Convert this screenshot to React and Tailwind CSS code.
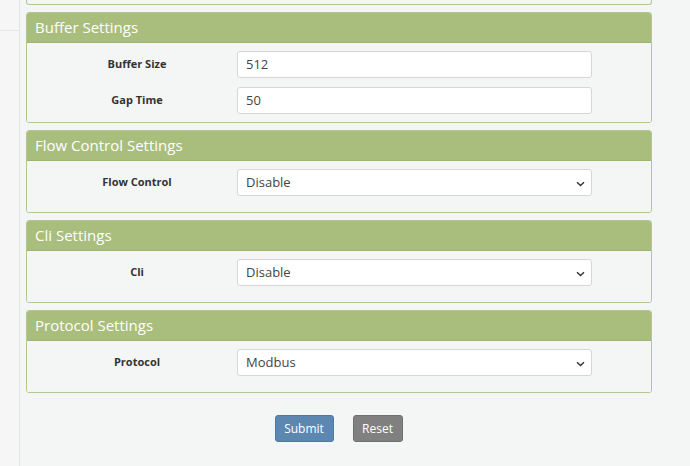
import React from 'react';

const font = { fontFamily: '"Open Sans", "Noto Sans", sans-serif' };

const Chevron = () => (
  <svg width="9" height="6" viewBox="0 0 9 6" className="absolute right-[6px] top-[11px]">
    <path d="M1 1.2 L4.5 4.6 L8 1.2" fill="none" stroke="#333" strokeWidth="1.4" />
  </svg>
);

const Field = ({ label, value, select }) => (
  <div className="flex items-center h-[27px]">
    <div className="w-[200px] text-center text-[11px] font-bold text-[#333]">{label}</div>
    <div className="relative w-[355px] h-[27px] bg-white border border-[#d6d6d6] rounded-[3px] flex items-center pl-[8px] text-[13px] text-[#444]">
      {value}
      {select && <Chevron />}
    </div>
  </div>
);

const Card = ({ title, children, bottom }) => (
  <div className="border border-[#b4c78f] rounded-[3px] overflow-hidden">
    <div className="h-[30px] bg-[#a9bd7c] border-b border-[#9fb472] flex items-center pl-[8px] text-[15px] text-white">
      {title}
    </div>
    <div className={`bg-[#f4f6f6] pl-[10px] pt-[8px] flex flex-col gap-[9px] ${bottom}`}>{children}</div>
  </div>
);

export default function App() {
  return (
    <div style={font} className="w-[690px] h-[466px] overflow-hidden flex bg-[#f4f6f6]">
      <div className="w-[20px] shrink-0 bg-[#f6f6f6] border-r border-[#e2e4e4] flex flex-col">
        <div className="h-[31px] border-b border-[#e6e6e6]" />
      </div>
      <div className="flex-1 pl-[6px] pr-[38px]">
        <div className="h-[5px] border border-t-0 border-[#b4c78f] rounded-b-[3px] bg-[#f4f6f6]" />
        <div className="mt-[7px] flex flex-col gap-[7px]">
          <Card title="Buffer Settings" bottom="pb-[8px]">
            <Field label="Buffer Size" value="512" />
            <Field label="Gap Time" value="50" />
          </Card>
          <Card title="Flow Control Settings" bottom="pb-[16px]">
            <Field label="Flow Control" value="Disable" select />
          </Card>
          <Card title="Cli Settings" bottom="pb-[16px]">
            <Field label="Cli" value="Disable" select />
          </Card>
          <Card title="Protocol Settings" bottom="pb-[16px]">
            <Field label="Protocol" value="Modbus" select />
          </Card>
        </div>
        <div className="flex justify-center gap-[19px] mt-[22px] pr-[1px]">
          <button className="w-[59px] h-[27px] bg-[#5b87b1] border border-[#4d79a3] rounded-[3px] text-white text-[12px]">
            Submit
          </button>
          <button className="w-[50px] h-[27px] bg-[#808080] border border-[#6f6f6f] rounded-[3px] text-white text-[12px]">
            Reset
          </button>
        </div>
      </div>
    </div>
  );
}
